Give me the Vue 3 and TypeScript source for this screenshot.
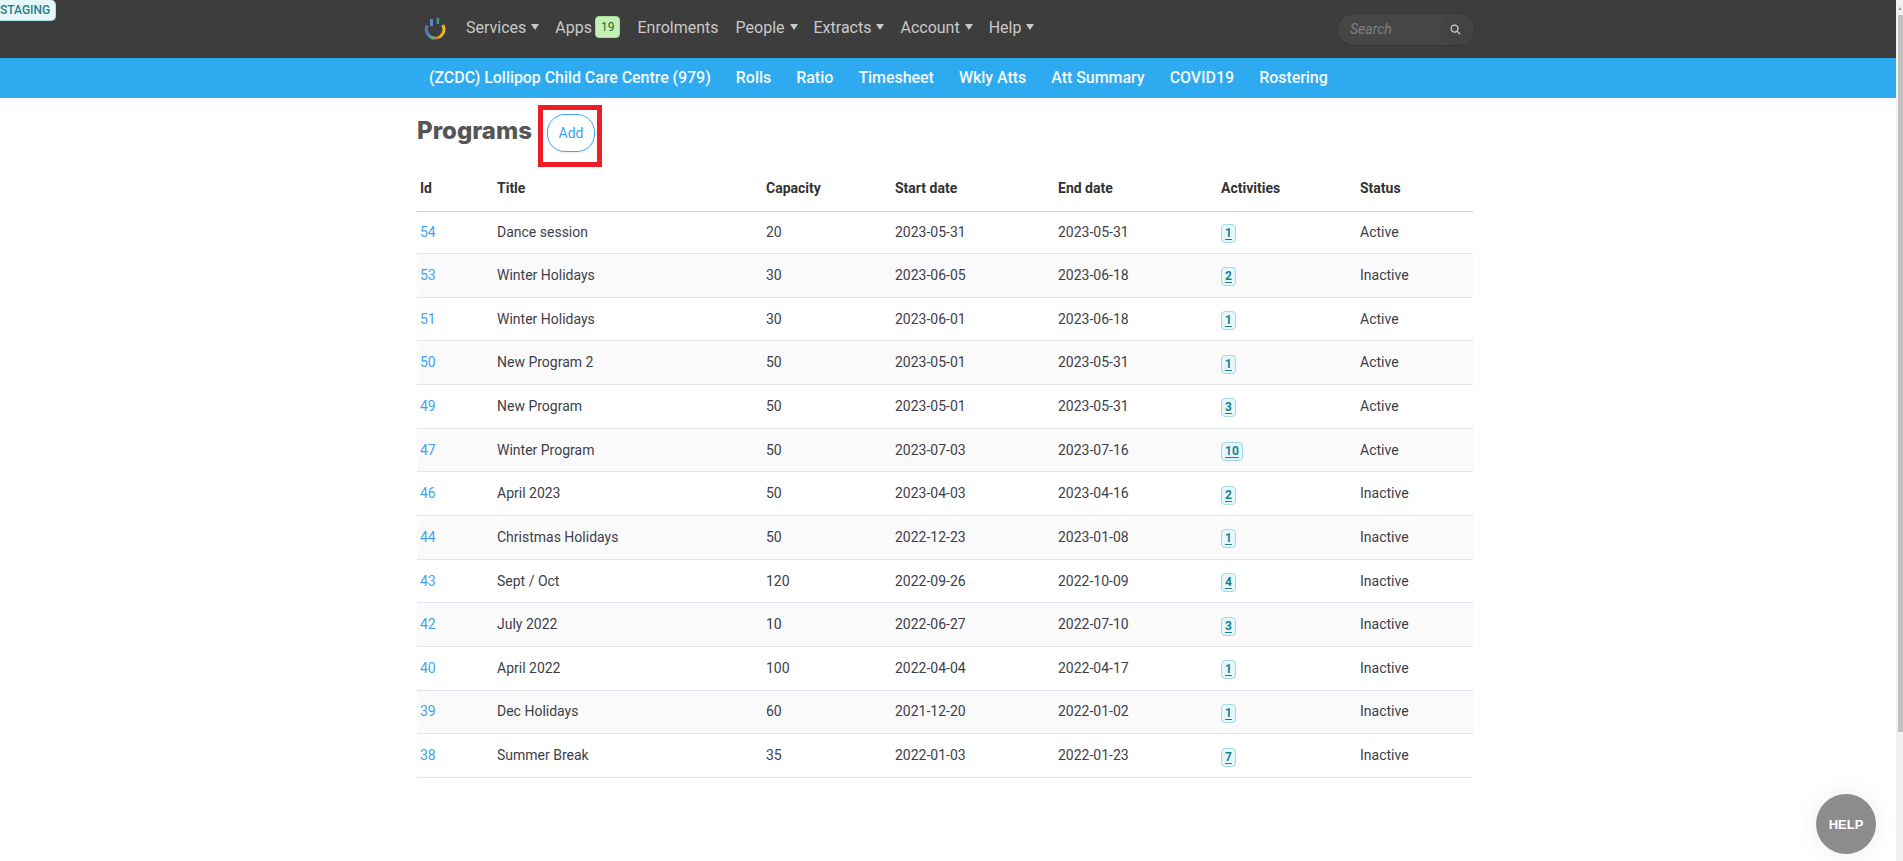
<template>
  <div class="page">
    <div class="main">
      <span class="staging">STAGING</span>

      <header class="topbar">
        <div class="wrap top-row">
          <svg class="logo" width="24" height="30" viewBox="0 0 24 30">
            <defs>
              <linearGradient id="ring" x1="0" y1="0" x2="1" y2="0">
                <stop offset="0" stop-color="#5a6fc0" />
                <stop offset="0.35" stop-color="#58b09a" />
                <stop offset="0.55" stop-color="#c8722e" />
                <stop offset="0.8" stop-color="#eab52a" />
                <stop offset="1" stop-color="#eab52a" />
              </linearGradient>
            </defs>
            <path d="M4.2 9.5 A8.8 8.8 0 1 0 19.8 9" fill="none" stroke="url(#ring)" stroke-width="3" />
            <rect x="7" y="3" width="3" height="7" fill="#5b86cc" />
            <rect x="13.7" y="2" width="2.4" height="6" fill="#3fa08a" />
          </svg>
          <nav class="menu">
            <a v-for="item in menu" :key="item.label" class="menu-item">
              {{ item.label }}
              <span v-if="item.count" class="count">{{ item.count }}</span>
              <span v-if="item.caret" class="caret"></span>
            </a>
          </nav>
          <div class="search">
            <span class="search-text">Search</span>
            <span class="search-btn">
              <svg width="11" height="11" viewBox="0 0 12 12" fill="none" stroke="#d5d5d5" stroke-width="1.4">
                <circle cx="5" cy="5" r="3.8" />
                <path d="M8 8l3 3" />
              </svg>
            </span>
          </div>
        </div>
      </header>

      <div class="subbar">
        <div class="wrap sub-row">
          <a v-for="item in subMenu" :key="item">{{ item }}</a>
        </div>
      </div>

      <main class="wrap content">
        <div class="title-row">
          <h1>Programs</h1>
          <span class="add-outline">
            <button class="add">Add</button>
          </span>
        </div>

        <table>
          <thead>
            <tr>
              <th class="c-id">Id</th>
              <th class="c-title">Title</th>
              <th class="c-cap">Capacity</th>
              <th class="c-start">Start date</th>
              <th class="c-end">End date</th>
              <th class="c-act">Activities</th>
              <th>Status</th>
            </tr>
          </thead>
          <tbody>
            <tr v-for="row in rows" :key="row.id">
              <td><a class="id-link">{{ row.id }}</a></td>
              <td>{{ row.title }}</td>
              <td>{{ row.capacity }}</td>
              <td>{{ row.start }}</td>
              <td>{{ row.end }}</td>
              <td><span class="tag"><u>{{ row.activities }}</u></span></td>
              <td>{{ row.status }}</td>
            </tr>
          </tbody>
        </table>
      </main>

      <button class="help">HELP</button>
    </div>

    <div class="rail">
      <span class="rail-arrow"></span>
      <div class="thumb"></div>
    </div>
  </div>
</template>

<script setup lang="ts">
interface Row {
  id: number
  title: string
  capacity: number
  start: string
  end: string
  activities: number
  status: string
}

const menu = [
  { label: 'Services', caret: true },
  { label: 'Apps', count: 19 },
  { label: 'Enrolments' },
  { label: 'People', caret: true },
  { label: 'Extracts', caret: true },
  { label: 'Account', caret: true },
  { label: 'Help', caret: true },
]

const subMenu = [
  '(ZCDC) Lollipop Child Care Centre (979)',
  'Rolls',
  'Ratio',
  'Timesheet',
  'Wkly Atts',
  'Att Summary',
  'COVID19',
  'Rostering',
]

const rows: Row[] = [
  { id: 54, title: 'Dance session', capacity: 20, start: '2023-05-31', end: '2023-05-31', activities: 1, status: 'Active' },
  { id: 53, title: 'Winter Holidays', capacity: 30, start: '2023-06-05', end: '2023-06-18', activities: 2, status: 'Inactive' },
  { id: 51, title: 'Winter Holidays', capacity: 30, start: '2023-06-01', end: '2023-06-18', activities: 1, status: 'Active' },
  { id: 50, title: 'New Program 2', capacity: 50, start: '2023-05-01', end: '2023-05-31', activities: 1, status: 'Active' },
  { id: 49, title: 'New Program', capacity: 50, start: '2023-05-01', end: '2023-05-31', activities: 3, status: 'Active' },
  { id: 47, title: 'Winter Program', capacity: 50, start: '2023-07-03', end: '2023-07-16', activities: 10, status: 'Active' },
  { id: 46, title: 'April 2023', capacity: 50, start: '2023-04-03', end: '2023-04-16', activities: 2, status: 'Inactive' },
  { id: 44, title: 'Christmas Holidays', capacity: 50, start: '2022-12-23', end: '2023-01-08', activities: 1, status: 'Inactive' },
  { id: 43, title: 'Sept / Oct', capacity: 120, start: '2022-09-26', end: '2022-10-09', activities: 4, status: 'Inactive' },
  { id: 42, title: 'July 2022', capacity: 10, start: '2022-06-27', end: '2022-07-10', activities: 3, status: 'Inactive' },
  { id: 40, title: 'April 2022', capacity: 100, start: '2022-04-04', end: '2022-04-17', activities: 1, status: 'Inactive' },
  { id: 39, title: 'Dec Holidays', capacity: 60, start: '2021-12-20', end: '2022-01-02', activities: 1, status: 'Inactive' },
  { id: 38, title: 'Summer Break', capacity: 35, start: '2022-01-03', end: '2022-01-23', activities: 7, status: 'Inactive' },
]
</script>

<style>
html,
body {
  margin: 0;
  height: 100%;
  overflow: hidden;
  background: #fff;
}
</style>

<style scoped>
.page {
  display: flex;
  height: 861px;
  font-family: Roboto, "Liberation Sans", sans-serif;
  color: #3e3e4a;
}

.main {
  position: relative;
  flex: 1;
  min-width: 0;
}

.wrap {
  width: 1056px;
  margin-left: 417px;
}

.staging {
  position: absolute;
  top: 0;
  left: -7px;
  z-index: 2;
  padding: 2px 5px 2px 6px;
  font-size: 12px;
  line-height: 16px;
  font-weight: 500;
  color: #1f7f8c;
  background: #e6f7f9;
  border: 1px solid #a8dde6;
  border-top: none;
  border-radius: 5px;
}

.topbar {
  height: 58px;
  background: #3d3d3d;
}

.top-row {
  display: flex;
  align-items: center;
  height: 54px;
}

.logo {
  margin-left: 6px;
  margin-top: 8px;
  flex: none;
}

.menu {
  display: flex;
  align-items: center;
  gap: 17px;
  margin-left: 19px;
}

.menu-item {
  display: flex;
  align-items: center;
  font-size: 16px;
  color: #c9c9c9;
}

.count {
  margin-left: 3px;
  padding: 0 5px;
  font-size: 12px;
  line-height: 20px;
  color: #2d6a2d;
  background: #c4f0b4;
  border: 1px solid #a5dc93;
  border-radius: 4px;
}

.caret {
  width: 0;
  height: 0;
  margin-left: 5px;
  margin-right: -1px;
  border-left: 4px solid transparent;
  border-right: 4px solid transparent;
  border-top: 6px solid #c9c9c9;
}

.search {
  display: flex;
  align-items: center;
  justify-content: space-between;
  flex: none;
  width: 138px;
  height: 33px;
  margin-left: auto;
  margin-right: -2px;
  margin-top: 4px;
  padding-left: 12px;
  box-sizing: border-box;
  background: #464646;
  border: 1px solid #363636;
  border-radius: 17px;
}

.search-text {
  font-size: 14px;
  font-style: italic;
  color: #808080;
}

.search-btn {
  display: flex;
  align-items: center;
  justify-content: center;
  width: 34px;
  height: 31px;
  padding-right: 3px;
  box-sizing: border-box;
  border-radius: 16px;
  background: #434343;
}

.subbar {
  height: 40px;
  background: #2eabf0;
}

.sub-row {
  display: flex;
  align-items: center;
  gap: 25.2px;
  height: 38px;
  padding-left: 12px;
  box-sizing: border-box;
  font-size: 16px;
  font-weight: 500;
  letter-spacing: -0.06px;
  color: #f2f8fd;
}

.content {
  padding-top: 7px;
}

.title-row {
  display: flex;
  align-items: flex-start;
}

h1 {
  margin: 11px 0 0;
  font-family: Inter, "Liberation Sans", sans-serif;
  font-size: 24px;
  line-height: 30px;
  font-weight: 800;
  color: #555;
}

.add-outline {
  display: flex;
  align-items: flex-start;
  width: 64px;
  height: 62px;
  margin-left: 6px;
  padding: 4px 0 0 4px;
  box-sizing: border-box;
  border: 5px solid #ee1c25;
}

.add {
  flex: none;
  width: 48px;
  height: 38px;
  padding: 0;
  font-family: inherit;
  font-size: 14px;
  color: #3fa4f0;
  background: #fff;
  border: 1px solid #3fa9f5;
  border-radius: 18px;
  box-shadow: 0 1px 2px rgba(0, 0, 0, 0.08);
}

table {
  width: 100%;
  border-collapse: collapse;
  table-layout: fixed;
  font-size: 14px;
}

th,
td {
  box-sizing: border-box;
  padding: 0 0 1px 3px;
}

th {
  height: 44px;
  text-align: left;
  font-weight: 700;
  color: #333;
  border-bottom: 1px solid #cfd2d6;
}

td {
  height: 43.66px;
  border-bottom: 1px solid #e0e5ee;
}

tbody tr:first-child td {
  height: 42.6px;
}

tbody tr:nth-child(even) {
  background: #fafafa;
}

.c-id { width: 77px; }
.c-title { width: 269px; }
.c-cap { width: 129px; }
.c-start { width: 163px; }
.c-end { width: 163px; }
.c-act { width: 139px; }

.id-link {
  color: #3fa4f0;
}

.tag {
  display: inline-block;
  min-width: 7px;
  margin-top: 4px;
  padding: 0 3px 1px;
  font-size: 12px;
  font-weight: 700;
  line-height: 16px;
  text-align: center;
  color: #1f7f8c;
  background: #e6f7f9;
  border: 1px solid #a0dbe6;
  border-radius: 4px;
}

.tag u {
  text-underline-offset: 2px;
}

.help {
  position: absolute;
  top: 794px;
  left: 1816px;
  width: 60px;
  height: 60px;
  padding: 0;
  font-family: "Liberation Sans", sans-serif;
  font-size: 13px;
  font-weight: 700;
  color: #fff;
  background: #8c8c8c;
  border: none;
  border-radius: 50%;
  box-shadow: 0 0 24px rgba(0, 0, 0, 0.08);
}

.rail {
  flex: none;
  width: 7px;
  height: 861px;
  box-sizing: border-box;
  background: #f1f1f1;
}

.rail-arrow {
  display: block;
  width: 0;
  height: 0;
  margin: 7px 0 5px 2px;
  border-left: 2.5px solid transparent;
  border-right: 2.5px solid transparent;
  border-bottom: 3px solid #a3a3a3;
}

.thumb {
  width: 5px;
  height: 717px;
  margin-left: 2px;
  background: #c1c1c1;
}
</style>
